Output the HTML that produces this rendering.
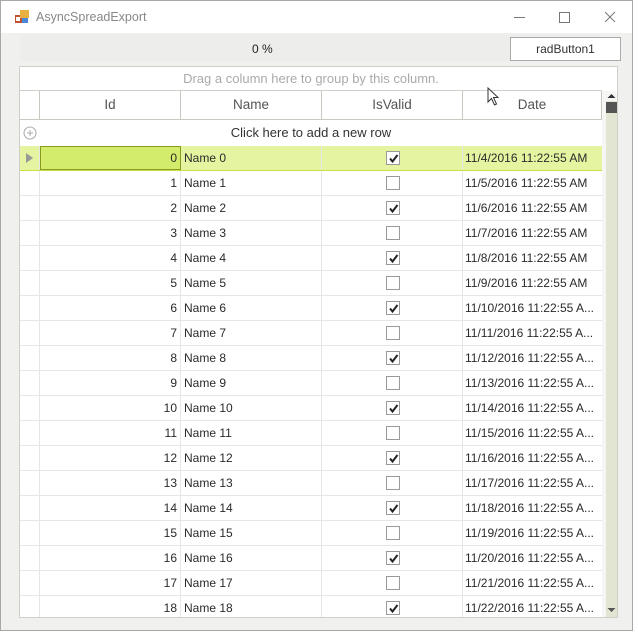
<!DOCTYPE html>
<html><head><style>
*{margin:0;padding:0;box-sizing:border-box}
body{width:638px;height:634px;background:#fff;font-family:"Liberation Sans",sans-serif;position:relative;overflow:hidden}
.win{position:absolute;left:0;top:0;width:633px;height:631px;border:1px solid #a8a8a8;background:#f0f0ee}
.title{position:absolute;left:0;top:0;width:631px;height:32px;background:#fff}
.abs{position:absolute}
.grid{position:absolute;left:19px;top:66px;width:599px;height:552px;border:1px solid #d0d0c8;background:#fff;overflow:hidden}
.row{position:absolute;left:0;height:25px;width:582px;border-bottom:1px solid #e6e6e6;font-size:12px;color:#2a2a2a}
.c{position:absolute;top:0;height:24px;line-height:24px;border-right:1px solid #e6e6e6;white-space:nowrap;overflow:hidden}
.cb{position:absolute;left:366px;top:5px;width:14px;height:14px;border:1px solid #9a9a9a;background:#fff}
.cb svg{position:absolute;left:1px;top:1px}
</style></head><body>
<div class="win">
 <div class="title">
  <svg class="abs" style="left:14px;top:9px" width="14" height="14"><rect x="0" y="5" width="7" height="8" fill="#c05030"/><rect x="5" y="0" width="9" height="8" fill="#e8b040"/><rect x="7" y="8" width="6" height="5" fill="#4a88d8"/><rect x="1" y="7" width="4" height="4" fill="#fff"/></svg>
  <div class="abs" style="left:35px;top:9px;font-size:12.5px;color:#888">AsyncSpreadExport</div>
  <div class="abs" style="left:513px;top:16px;width:11px;height:1px;background:#777"></div>
  <div class="abs" style="left:558px;top:11px;width:11px;height:11px;border:1px solid #777"></div>
  <svg class="abs" style="left:603px;top:10px" width="12" height="12"><path d="M1 1L11 11M11 1L1 11" stroke="#777" stroke-width="1"/></svg>
 </div>
 <div class="abs" style="left:19px;top:33px;width:580px;height:27px;background:#ededeb"></div>
 <div class="abs" style="left:251px;top:41px;font-size:12px;color:#222">0 %</div>
 <div class="abs" style="left:509px;top:36px;width:111px;height:24px;border:1px solid #aaa;background:#fff;font-size:12px;color:#333;text-align:center;line-height:22px">radButton1</div>
</div>
<div class="grid">
 <div class="abs" style="left:0;top:0;width:582px;height:24px;border-bottom:1px solid #d0d0c8;text-align:center;line-height:24px;font-size:13px;color:#aaa">Drag a column here to group by this column.</div>
 <div class="abs" style="left:0;top:24px;width:582px;height:29px;border-bottom:1px solid #c8c8c0;font-size:13.5px;color:#555">
  <div class="c" style="left:0;width:20px;height:28px;border-right:1px solid #c8c8c0"></div>
  <div class="c" style="left:20px;width:141px;height:28px;line-height:28px;text-align:center;border-right:1px solid #c8c8c0">Id</div>
  <div class="c" style="left:161px;width:141px;height:28px;line-height:28px;text-align:center;border-right:1px solid #c8c8c0">Name</div>
  <div class="c" style="left:302px;width:141px;height:28px;line-height:28px;text-align:center;border-right:1px solid #c8c8c0">IsValid</div>
  <div class="c" style="left:443px;width:139px;height:28px;line-height:28px;text-align:center;border-right:1px solid #c8c8c0">Date</div>
 </div>
 <div class="abs" style="left:0;top:53px;width:582px;height:26px;font-size:13px;color:#333;text-align:center;line-height:26px">Click here to add a new row</div>
 <svg class="abs" style="left:3px;top:59px" width="14" height="14"><circle cx="7" cy="7" r="6" fill="none" stroke="#aaa"/><path d="M7 4V10M4 7H10" stroke="#aaa"/></svg>
 <div class="abs" style="left:582px;top:24px;width:17px;height:528px;background:#f6f6f4"></div>
 <div class="abs" style="left:586px;top:34px;width:11px;height:516px;background:#e3e5d3"></div>
 <div class="abs" style="left:586px;top:35px;width:11px;height:11px;background:#555"></div>
 <svg class="abs" style="left:586px;top:26px" width="11" height="6"><path d="M1.5 5L5.5 1L9.5 5Z" fill="#333"/></svg>
 <svg class="abs" style="left:586px;top:540px" width="11" height="6"><path d="M1.5 1L5.5 5L9.5 1Z" fill="#555"/></svg>
 <div id="rows"></div>
</div>
<script>
(function(){
var h='';
for(var i=0;i<19;i++){
 var ty=79+i*25, sel=i==0;
 h+='<div class="row" style="top:'+ty+'px;'+(sel?'background:#e4f4a0;border-bottom:1px solid #c8e040':'')+'">';
 h+='<div class="c" style="left:0;width:20px">'+(sel?'<svg style="position:absolute;left:6px;top:7px" width="7" height="10"><path d="M0 0L7 5L0 10Z" fill="#999"/></svg>':'')+'</div>';
 h+='<div class="c" style="left:20px;width:141px;text-align:right;padding-right:3px;'+(sel?'background:#d4ec6c;border:1px solid #8a9a20;line-height:22px;':'')+'">'+i+'</div>';
 h+='<div class="c" style="left:161px;width:141px;padding-left:3px">Name '+i+'</div>';
 h+='<div class="c" style="left:302px;width:141px"></div><div class="cb">'+(i%2==0?'<svg width="11" height="11"><path d="M2 5.5L4.5 8.5L9.5 2" fill="none" stroke="#222" stroke-width="2"/></svg>':'')+'</div>';
 var d='11/'+(4+i)+'/2016 11:22:55 '+(i<6?'AM':'A...');
 h+='<div class="c" style="left:443px;width:139px;padding-left:2px;border-right:none">'+d+'</div></div>';
}
document.getElementById('rows').innerHTML=h;
})();
</script>
<svg class="abs" style="left:487px;top:87px" width="14" height="20"><path d="M1 1L1 15L4.5 11.5L7.5 18L9.5 17L6.5 10.5L11 10.5Z" fill="#fff" stroke="#333"/></svg>
</body></html>
